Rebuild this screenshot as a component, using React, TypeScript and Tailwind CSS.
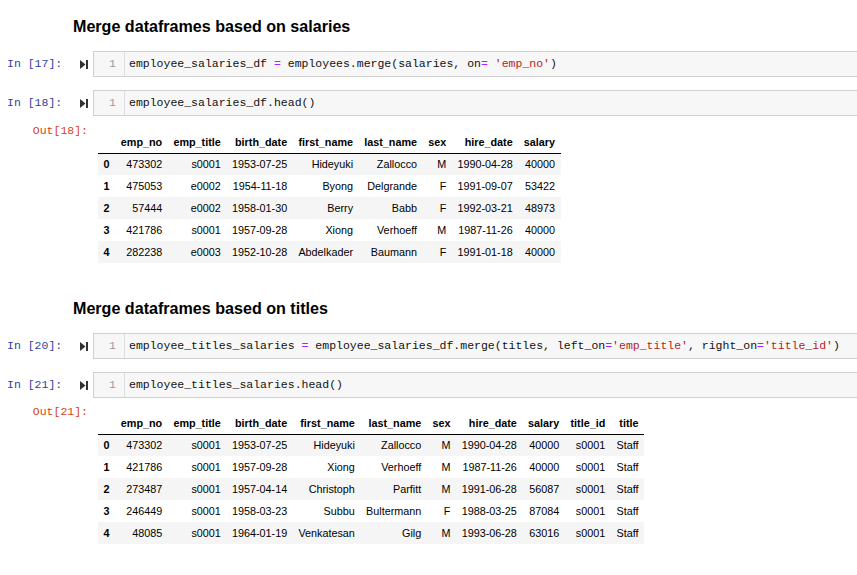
import type { ReactNode } from "react";

type Row = (string | number)[];

const salaryCols = ["emp_no", "emp_title", "birth_date", "first_name", "last_name", "sex", "hire_date", "salary"];
const salaryRows: Row[] = [
  [473302, "s0001", "1953-07-25", "Hideyuki", "Zallocco", "M", "1990-04-28", 40000],
  [475053, "e0002", "1954-11-18", "Byong", "Delgrande", "F", "1991-09-07", 53422],
  [57444, "e0002", "1958-01-30", "Berry", "Babb", "F", "1992-03-21", 48973],
  [421786, "s0001", "1957-09-28", "Xiong", "Verhoeff", "M", "1987-11-26", 40000],
  [282238, "e0003", "1952-10-28", "Abdelkader", "Baumann", "F", "1991-01-18", 40000],
];

const titleCols = [...salaryCols, "title_id", "title"];
const titleRows: Row[] = [
  [473302, "s0001", "1953-07-25", "Hideyuki", "Zallocco", "M", "1990-04-28", 40000, "s0001", "Staff"],
  [421786, "s0001", "1957-09-28", "Xiong", "Verhoeff", "M", "1987-11-26", 40000, "s0001", "Staff"],
  [273487, "s0001", "1957-04-14", "Christoph", "Parfitt", "M", "1991-06-28", 56087, "s0001", "Staff"],
  [246449, "s0001", "1958-03-23", "Subbu", "Bultermann", "F", "1988-03-25", 87084, "s0001", "Staff"],
  [48085, "s0001", "1964-01-19", "Venkatesan", "Gilg", "M", "1993-06-28", 63016, "s0001", "Staff"],
];

const mono = "font-['Liberation_Mono','DejaVu_Sans_Mono',monospace]";

function RunIcon() {
  return (
    <svg width="8" height="9" viewBox="0 0 8 9" className="ml-auto mr-[5px]">
      <path d="M0 0 L5.5 4.5 L0 9 Z" fill="#333" />
      <rect x="6" y="0" width="2" height="9" fill="#333" />
    </svg>
  );
}

function Op({ children }: { children: ReactNode }) {
  return <span className="text-[#aa22ff]">{children}</span>;
}

function Str({ children }: { children: ReactNode }) {
  return <span className="text-[#ba2121]">{children}</span>;
}

function CodeCell({ n, className, children }: { n: number; className?: string; children: ReactNode }) {
  return (
    <div className={`flex items-center ${className ?? ""}`}>
      <div className={`w-[93px] flex items-center text-[11.5px] text-[#303f9f] ${mono}`}>
        <span className="ml-[7px]">In [{n}]:</span>
        <RunIcon />
      </div>
      <div className="flex flex-1 h-[26px] border border-[#cfcfcf] bg-[#f7f7f7]">
        <div
          className={`w-[31px] shrink-0 border-r border-[#dddddd] pr-[8px] text-right text-[11.5px] leading-[24px] text-[#999] ${mono}`}
        >
          1
        </div>
        <div className={`pl-[4px] text-[11.5px] leading-[24px] text-[#111] whitespace-pre ${mono}`}>{children}</div>
      </div>
    </div>
  );
}

function DataFrame({ n, cols, rows, className }: { n: number; cols: string[]; rows: Row[]; className?: string }) {
  return (
    <div className={`flex items-start ${className ?? ""}`}>
      <div className={`w-[93px] pr-[5px] text-right text-[11.5px] leading-[14px] text-[#d84315] ${mono}`}>Out[{n}]:</div>
      <table className="mt-[8px] ml-[5px] border-collapse text-[10.8px] leading-[12px] text-black font-['Liberation_Sans',Arial,sans-serif]">
        <thead>
          <tr className="border-b border-black">
            <th className="px-[5.6px] h-[21px]"></th>
            {cols.map((c) => (
              <th key={c} className="px-[5.6px] h-[21px] text-right font-bold">
                {c}
              </th>
            ))}
          </tr>
        </thead>
        <tbody>
          {rows.map((r, i) => (
            <tr key={i} className={i % 2 === 0 ? "bg-[#f5f5f5]" : "bg-white"}>
              <th className="px-[5.6px] h-[22px] text-left font-bold">{i}</th>
              {r.map((v, j) => (
                <td key={j} className="px-[5.6px] h-[22px] text-right">
                  {v}
                </td>
              ))}
            </tr>
          ))}
        </tbody>
      </table>
    </div>
  );
}

function Heading({ children, className }: { children: ReactNode; className?: string }) {
  return (
    <h2
      className={`pl-[73px] h-[20px] text-[16.1px] leading-[20px] font-bold text-black font-['Liberation_Sans',Arial,sans-serif] ${className ?? ""}`}
    >
      {children}
    </h2>
  );
}

export default function App() {
  return (
    <div className="w-[857px] h-[575px] overflow-hidden bg-white">
      <div className="w-[900px] flex flex-col pt-[16px]">
        <Heading>Merge dataframes based on salaries</Heading>

        <CodeCell n={17} className="mt-[15px]">
          employee_salaries_df <Op>=</Op> employees.merge(salaries, on<Op>=</Op> <Str>'emp_no'</Str>)
        </CodeCell>
        <CodeCell n={18} className="mt-[13px]">
          employee_salaries_df.head()
        </CodeCell>
        <DataFrame n={18} cols={salaryCols} rows={salaryRows} className="mt-[8px]" />

        <Heading className="mt-[35px]">Merge dataframes based on titles</Heading>

        <CodeCell n={20} className="mt-[15px]">
          employee_titles_salaries <Op>=</Op> employee_salaries_df.merge(titles, left_on<Op>=</Op>
          <Str>'emp_title'</Str>, right_on<Op>=</Op>
          <Str>'title_id'</Str>)
        </CodeCell>
        <CodeCell n={21} className="mt-[13px]">
          employee_titles_salaries.head()
        </CodeCell>
        <DataFrame n={21} cols={titleCols} rows={titleRows} className="mt-[7px]" />
      </div>
    </div>
  );
}
